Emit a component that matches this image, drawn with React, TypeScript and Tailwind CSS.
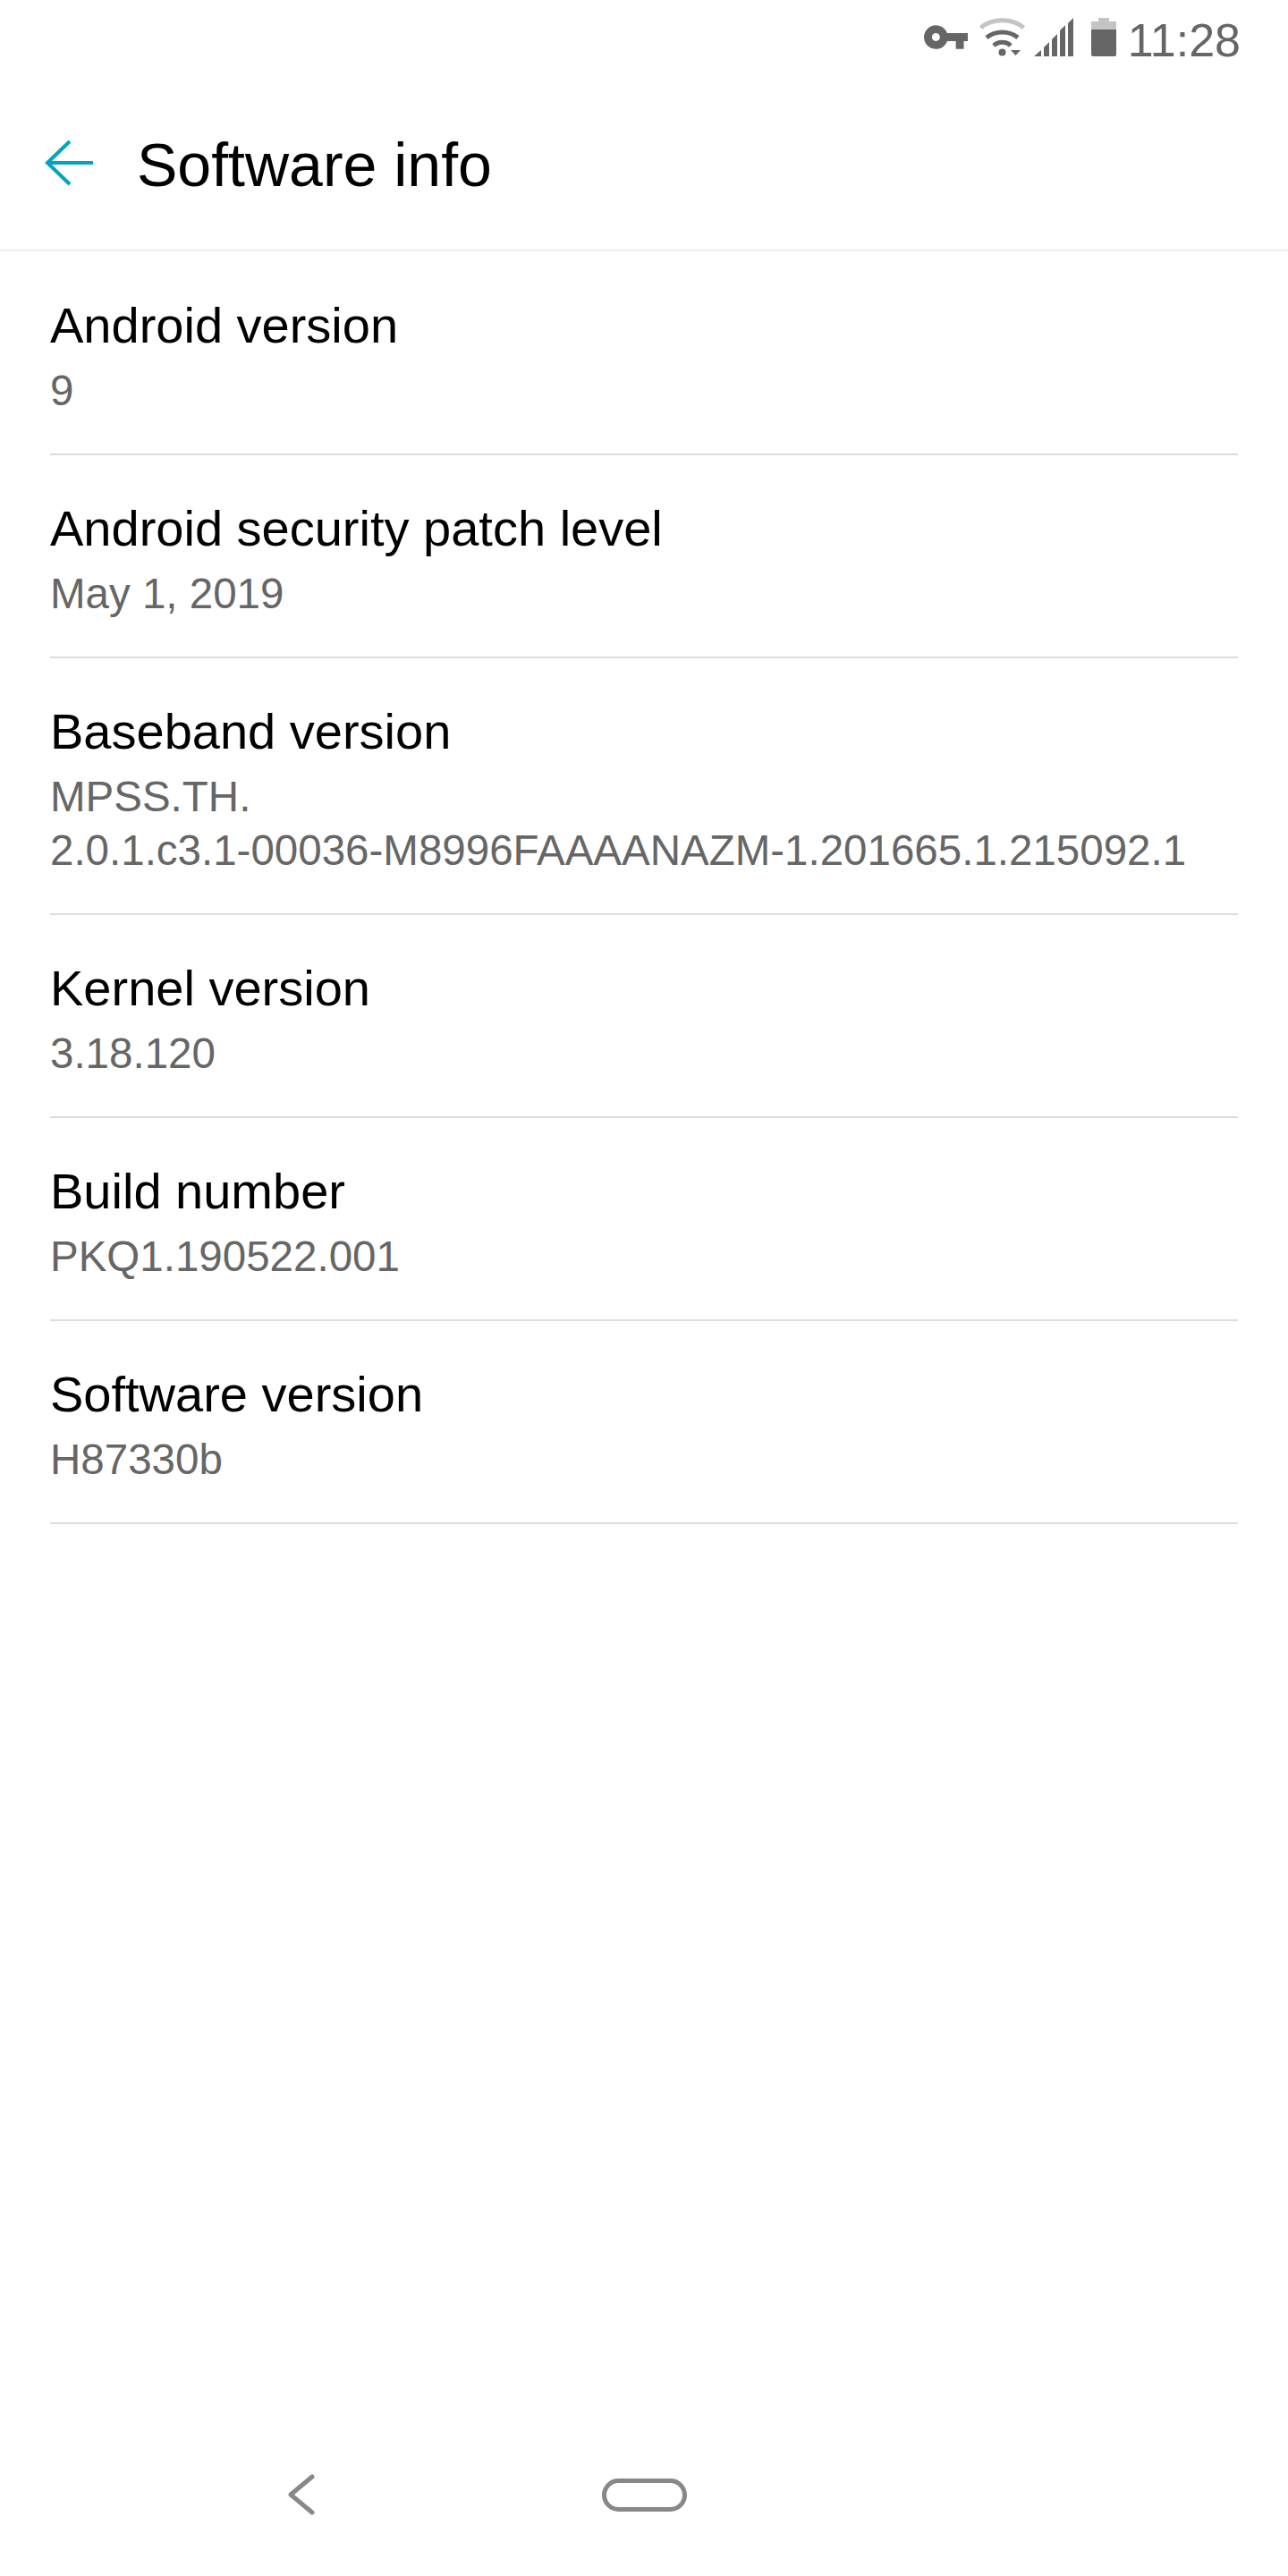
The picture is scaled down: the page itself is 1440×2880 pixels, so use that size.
const rows = [
  { title: "Android version", value: ["9"] },
  { title: "Android security patch level", value: ["May 1, 2019"] },
  { title: "Baseband version", value: ["MPSS.TH.", "2.0.1.c3.1-00036-M8996FAAAANAZM-1.201665.1.215092.1"] },
  { title: "Kernel version", value: ["3.18.120"] },
  { title: "Build number", value: ["PKQ1.190522.001"] },
  { title: "Software version", value: ["H87330b"] },
];

function StatusIcons() {
  return (
    <div className="flex items-start">
      {/* vpn key */}
      <svg width="49" height="27" viewBox="1 6 22 12" className="mt-[8px]">
        <path
          fillRule="evenodd"
          d="M12.65 10C11.83 7.67 9.61 6 7 6c-3.31 0-6 2.690-6 6s2.690 6 6 6c2.610 0 4.830-1.670 5.650-4H17v4h4v-4h2v-4H12.650zM7 14c-1.100 0-2-.9-2-2s.9-2 2-2 2 .9 2 2-.9 2-2 2z"
          fill="#666666"
        />
      </svg>
      {/* wifi */}
      <svg width="51" height="43" viewBox="0 0 51 43" className="ml-[13px]">
        <path d="M1.500 11C14 0 37 0 49.500 11" fill="none" stroke="#c4c4c4" strokeWidth="5" />
        <path d="M8 22C18 14 33 14 43 22" fill="none" stroke="#666666" strokeWidth="5" />
        <path d="M16 31C21 26 30 26 35 31" fill="none" stroke="#666666" strokeWidth="5" />
        <circle cx="25.500" cy="38.500" r="4" fill="#666666" />
        <path d="M35 36h11l-5.500 6z" fill="#666666" />
      </svg>
      {/* signal */}
      <svg width="44" height="43" viewBox="0 0 44 43" className="ml-[10px]">
        <path d="M0 43L8 36V43zM11 33l6-6v16h-6zM20 24l6-6v25h-6zM29 14l6-6v35h-6zM38 6l6-6v43h-6z" fill="#666666" />
      </svg>
      {/* battery */}
      <svg width="28" height="43" viewBox="0 0 28 43" className="ml-[20px]">
        <path d="M8 0h12v4h8v9H0V4h8z" fill="#c4c4c4" />
        <path d="M0 13h28v28a2 2 0 0 1-2 2H2a2 2 0 0 1-2-2z" fill="#666666" />
      </svg>
    </div>
  );
}

export default function App() {
  return (
    <div className="flex h-[2880px] w-[1440px] flex-col bg-white font-['Liberation_Sans',sans-serif]">
      <div className="flex h-[72px] items-start justify-end pr-[53px] pt-[20px]">
        <StatusIcons />
        <span className="ml-[13px] text-[52px] leading-[50px] text-[#666666]">11:28</span>
      </div>

      <header className="flex h-[209px] items-start border-b-2 border-[#eeeeee] pl-[50px] pt-[72px]">
        <svg width="54" height="52" viewBox="0 0 54 52" className="mt-[12px]">
          <path d="M54 26H3M28 2L3 26l25 24" fill="none" stroke="#00a5bd" strokeWidth="4" />
        </svg>
        <h1 className="ml-[49px] text-[68px] leading-[80px] text-black">Software info</h1>
      </header>

      <div className="px-[56px] pt-[1px]">
        {rows.map((row) => (
          <div key={row.title} className="border-b-2 border-[#dddddd] pb-[40px] pt-[46px]">
            <div className="text-[56px] leading-[72px] text-black">{row.title}</div>
            <div className="mt-[7px] text-[47.5px] leading-[60px] text-[#666666]">
              {row.value.map((line) => (
                <div key={line}>{line}</div>
              ))}
            </div>
          </div>
        ))}
      </div>

      <div className="mt-auto flex items-center pb-[67px] pl-[322px]">
        <svg width="30" height="48" viewBox="0 0 30 48">
          <path d="M27 4L3 24l24 20" fill="none" stroke="#888888" strokeWidth="5" strokeLinecap="round" strokeLinejoin="round" />
        </svg>
        <div className="ml-[321px] h-[37px] w-[95px] rounded-[19px] border-[5px] border-[#888888]" />
      </div>
    </div>
  );
}
